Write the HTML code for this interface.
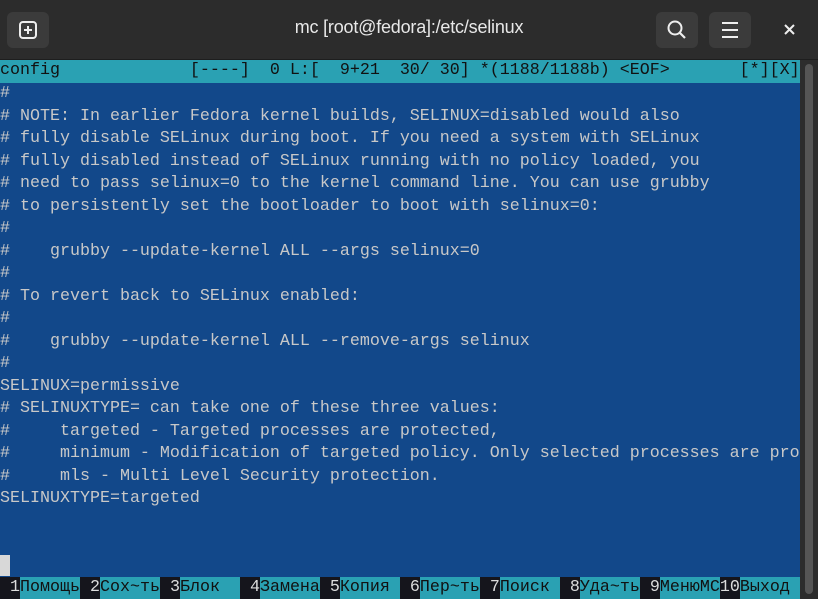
<!DOCTYPE html>
<html><head><meta charset="utf-8"><style>
*{margin:0;padding:0;box-sizing:border-box}
body{width:818px;height:599px;overflow:hidden;background:#12488a;font-family:"Liberation Mono","DejaVu Sans Mono",monospace;}
#tb{position:absolute;left:0;top:0;width:818px;height:60px;background:#2c2c2c;border-bottom:1px solid #1e1e1e}
.btn{position:absolute;top:12px;width:42px;height:36px;background:#3b3b3b;border-radius:6px}
#title{position:absolute;left:0;width:818px;top:17px;text-align:center;color:#e8e8e8;font-family:"Liberation Sans","DejaVu Sans",sans-serif;font-size:18px;letter-spacing:-0.2px}
#term{position:absolute;left:0;top:62px;width:800px;height:537px}
.r{height:22.5px;line-height:22.5px;font-size:16.67px;white-space:pre;color:#c8c8c8}
#st{background:#2aa1b3;color:#111;margin-top:-2px;height:23px;line-height:22px}
#sb{position:absolute;left:800px;top:60px;width:18px;height:539px;background:#2c2c2c}
#sb div{position:absolute;left:5px;top:4px;width:8px;height:530px;background:#555;border-radius:4px}
#fk{position:absolute;left:0;top:577px;width:800px;height:22px;font-size:16.67px;line-height:22px;white-space:pre}
#fk span{display:inline-block;height:22px}
.n{background:#15151c;color:#ddd}
.l{background:#2aa1b3;color:#111}
#cur{position:absolute;left:0;top:555px;width:10px;height:21px;background:#d8d8d8}
</style></head><body>
<div id="tb">
<div class="btn" style="left:7px"><svg width="42" height="36"><rect x="13" y="10" width="16" height="16" rx="3" fill="none" stroke="#eee" stroke-width="2"/><path d="M21 14v8M17 18h8" stroke="#eee" stroke-width="2"/></svg></div>
<div id="title">mc [root@fedora]:/etc/selinux</div>
<div class="btn" style="left:656px"><svg width="42" height="36"><circle cx="19" cy="16" r="6.5" fill="none" stroke="#eee" stroke-width="2"/><path d="M24 21l5 5" stroke="#eee" stroke-width="2.2"/></svg></div>
<div class="btn" style="left:709px"><svg width="42" height="36"><path d="M13 11h16M13 18h16M13 25h16" stroke="#eee" stroke-width="2"/></svg></div>
<svg style="position:absolute;left:780px;top:20px" width="20" height="20"><path d="M5 5l9 9M14 5l-9 9" stroke="#eee" stroke-width="2"/></svg>
</div>
<div id="term">
<div class="r" id="st">config             [----]  0 L:[  9+21  30/ 30] *(1188/1188b) &lt;EOF&gt;       [*][X]</div>
<div class="r">#</div>
<div class="r"># NOTE: In earlier Fedora kernel builds, SELINUX=disabled would also</div>
<div class="r"># fully disable SELinux during boot. If you need a system with SELinux</div>
<div class="r"># fully disabled instead of SELinux running with no policy loaded, you</div>
<div class="r"># need to pass selinux=0 to the kernel command line. You can use grubby</div>
<div class="r"># to persistently set the bootloader to boot with selinux=0:</div>
<div class="r">#</div>
<div class="r">#    grubby --update-kernel ALL --args selinux=0</div>
<div class="r">#</div>
<div class="r"># To revert back to SELinux enabled:</div>
<div class="r">#</div>
<div class="r">#    grubby --update-kernel ALL --remove-args selinux</div>
<div class="r">#</div>
<div class="r">SELINUX=permissive</div>
<div class="r"># SELINUXTYPE= can take one of these three values:</div>
<div class="r">#     targeted - Targeted processes are protected,</div>
<div class="r">#     minimum - Modification of targeted policy. Only selected processes are pro</div>
<div class="r">#     mls - Multi Level Security protection.</div>
<div class="r">SELINUXTYPE=targeted</div>
</div>
<div id="cur"></div>
<div id="sb"><div></div></div>
<div id="fk"><span class="n"> 1</span><span class="l">Помощь</span><span class="n"> 2</span><span class="l">Сох~ть</span><span class="n"> 3</span><span class="l">Блок  </span><span class="n"> 4</span><span class="l">Замена</span><span class="n"> 5</span><span class="l">Копия </span><span class="n"> 6</span><span class="l">Пер~ть</span><span class="n"> 7</span><span class="l">Поиск </span><span class="n"> 8</span><span class="l">Уда~ть</span><span class="n"> 9</span><span class="l">МенюMC</span><span class="n">10</span><span class="l">Выход </span></div>
</body></html>
